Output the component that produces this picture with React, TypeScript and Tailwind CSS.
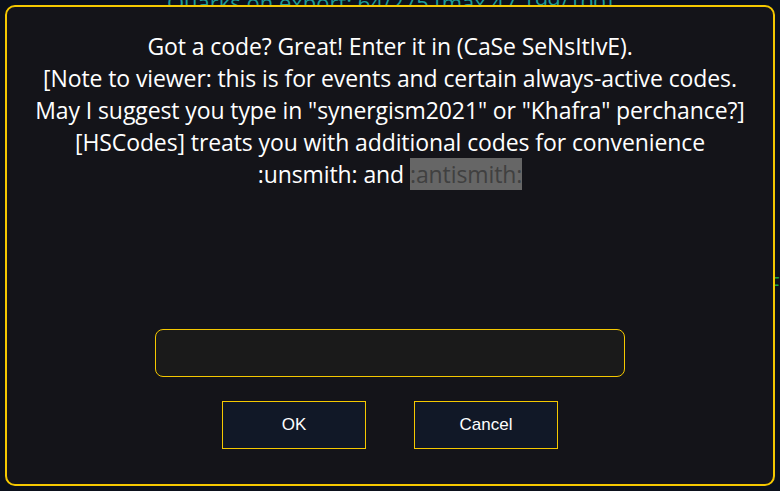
import React from 'react';

const App: React.FC = () => {
  return (
    <div className="relative w-[780px] h-[491px] overflow-hidden bg-[#0b101b]" style={{ fontFamily: '"Open Sans", "Noto Sans", sans-serif' }}>
      {/* page content behind the modal */}
      <div className="absolute left-0 right-0 top-[-14px] text-center text-[22px] text-[#1f9a96]">
        Quarks on export: 64/275 [max 47,199/100]
      </div>
      <div className="absolute left-[768px] top-[268px] text-[22px] text-[#22a33a] whitespace-nowrap">
        Free
      </div>

      {/* modal */}
      <div className="absolute left-[5px] top-[5px] w-[770px] h-[481px] rounded-[10px] border-2 border-[#f5c800] bg-[#141419] flex flex-col items-center">
        <div className="mt-[23px] text-center text-white text-[23px] leading-[32px] tracking-[-0.1px]">
          <div>Got a code? Great! Enter it in (CaSe SeNsItIvE).</div>
          <div>[Note to viewer: this is for events and certain always-active codes.</div>
          <div>May I suggest you type in "synergism2021" or "Khafra" perchance?]</div>
          <div>[HSCodes] treats you with additional codes for convenience</div>
          <div>
            :unsmith: and <span className="bg-[#666666] text-[#404040]">:antismith:</span>
          </div>
        </div>

        <input
          type="text"
          className="mt-[139px] w-[470px] h-[48px] rounded-[8px] border border-[#f5c800] bg-[#1a1a1a] text-white outline-none px-3"
        />

        <div className="mt-[24px] flex gap-[48px]">
          <button className="w-[144px] h-[48px] border border-[#f5c800] bg-[#111827] text-white text-[17px]" style={{ fontFamily: '"Liberation Sans", Arial, sans-serif' }}>
            OK
          </button>
          <button className="w-[144px] h-[48px] border border-[#f5c800] bg-[#111827] text-white text-[17px]" style={{ fontFamily: '"Liberation Sans", Arial, sans-serif' }}>
            Cancel
          </button>
        </div>
      </div>
    </div>
  );
};

export default App;
